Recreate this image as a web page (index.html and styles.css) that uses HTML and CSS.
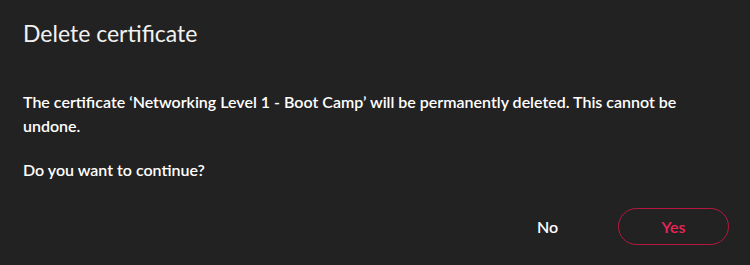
FILE: index.html
```html
<!DOCTYPE html>
<html>
<head>
<meta charset="utf-8">
<link rel="stylesheet" href="styles.css">
</head>
<body>
<div class="dialog">
  <h1 class="title">Delete certificate</h1>
  <p class="text">The certificate ‘Networking Level 1 - Boot Camp’ will be permanently deleted. This cannot be undone.</p>
  <p class="text question">Do you want to continue?</p>
  <div class="actions">
    <button class="btn btn-no">No</button>
    <button class="btn btn-yes">Yes</button>
  </div>
</div>
</body>
</html>
```
FILE: styles.css
```css
html, body {
  margin: 0;
  padding: 0;
  background: #222222;
}
.dialog {
  width: 750px;
  height: 265px;
  box-sizing: border-box;
  padding: 18px 21px 0 23px;
  font-family: Lato, "Open Sans", sans-serif;
  color: #ffffff;
}
.title {
  margin: 0;
  font-size: 23px;
  font-weight: 400;
  line-height: 30px;
  color: #f2f2f2;
}
.text {
  margin: 42px 0 0 0;
  font-size: 16px;
  font-weight: 600;
  line-height: 24px;
  max-width: 690px;
}
.question {
  margin-top: 20px;
}
.actions {
  display: flex;
  justify-content: flex-end;
  align-items: center;
  gap: 60px;
  margin-top: 26px;
}
.btn {
  font-family: inherit;
  font-size: 16px;
  font-weight: 600;
  background: transparent;
  border: 1px solid transparent;
  height: 37px;
  border-radius: 19px;
  padding: 0;
  cursor: pointer;
}
.btn-no {
  color: #ffffff;
  width: 22px;
}
.btn-yes {
  width: 111px;
  color: #e8265a;
  border-color: #b8183f;
}
```
